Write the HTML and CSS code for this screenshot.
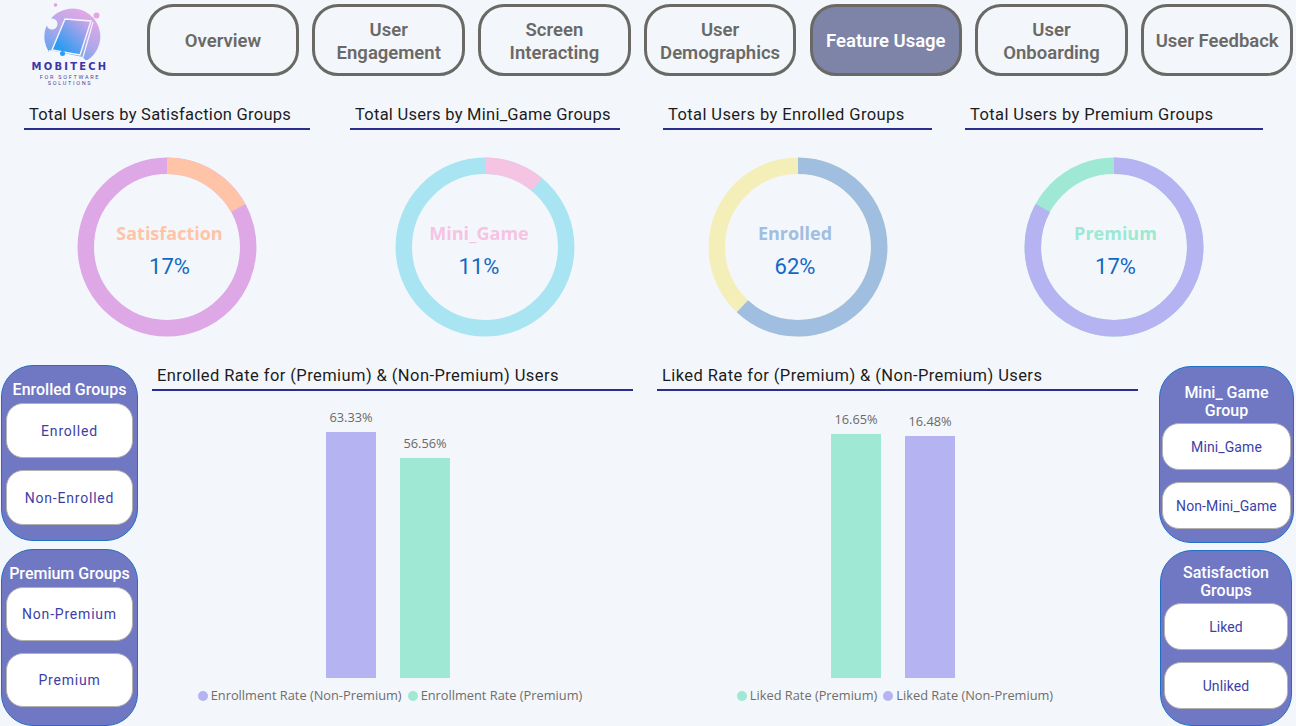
FILE: index.html
```html
<!DOCTYPE html>
<html lang="en">
<head>
    <meta charset="UTF-8">
    <title>Feature Usage</title>
    <link rel="stylesheet" href="styles.css">
</head>
<body>
    <header class="topBar">
        <div class="logo">
            <svg class="logoMark" width="80" height="60" viewBox="0 0 80 60">
                <defs>
                    <linearGradient id="logoFill" x1="0.1" y1="1" x2="0.7" y2="0">
                        <stop offset="0" stop-color="#4aa3f0"/>
                        <stop offset="0.55" stop-color="#b3a8ea"/>
                        <stop offset="1" stop-color="#e6a8e6"/>
                    </linearGradient>
                    <linearGradient id="tabletFill" x1="0" y1="1" x2="1" y2="0">
                        <stop offset="0.2" stop-color="#2a9cf2"/>
                        <stop offset="1" stop-color="#dfa6e8"/>
                    </linearGradient>
                </defs>
                <path d="M19 52 A28 28 0 1 1 56 61 L53 57 L19 50 Z" fill="url(#logoFill)"/>
                <path d="M35 19 L61 21 L50 55 L22 50 Z" fill="url(#tabletFill)" stroke="#f3f7fc" stroke-width="1.4"/>
                <path d="M63 22 L53 57" fill="none" stroke="#f3f7fc" stroke-width="1.2"/>
                <circle cx="25.5" cy="5" r="1.8" fill="#dfa0e0"/>
                <circle cx="66.5" cy="15.5" r="3" fill="#e3a5e3"/>
                <circle cx="22" cy="24" r="5.5" fill="#f3f7fc"/>
                <circle cx="32.5" cy="53.5" r="2.5" fill="#2a9cf2"/>
            </svg>
            <div class="logoName">MOBITECH</div>
            <div class="logoSub">FOR SOFTWARE<br>SOLUTIONS</div>
        </div>
        <nav class="navRow">
            <div class="navBtn">Overview</div>
            <div class="navBtn">User<br>Engagement</div>
            <div class="navBtn">Screen<br>Interacting</div>
            <div class="navBtn">User<br>Demographics</div>
            <div class="navBtn active">Feature Usage</div>
            <div class="navBtn">User<br>Onboarding</div>
            <div class="navBtn">User Feedback</div>
        </nav>
    </header>

    <section class="donutRow">
        <div class="donutPanel satisfaction">
            <h2 class="sectionTitle">Total Users by Satisfaction Groups</h2>
            <div class="donut">
                <svg width="180" height="180" viewBox="0 0 180 180">
                    <circle class="ring" cx="90" cy="90" r="81.2" pathLength="100" stroke="#dea8e6"/>
                    <circle class="ring" cx="90" cy="90" r="81.2" pathLength="100" stroke="#ffc4a8" stroke-dasharray="17 83"/>
                </svg>
                <div class="donutText">
                    <div class="donutName" style="color:#ffc4a8">Satisfaction</div>
                    <div class="donutValue">17%</div>
                </div>
            </div>
        </div>
        <div class="donutPanel miniGame">
            <h2 class="sectionTitle">Total Users by Mini_Game Groups</h2>
            <div class="donut">
                <svg width="180" height="180" viewBox="0 0 180 180">
                    <circle class="ring" cx="90" cy="90" r="81.2" pathLength="100" stroke="#a8e4f2"/>
                    <circle class="ring" cx="90" cy="90" r="81.2" pathLength="100" stroke="#f5c4e2" stroke-dasharray="11 89"/>
                </svg>
                <div class="donutText">
                    <div class="donutName" style="color:#f5c4e2">Mini_Game</div>
                    <div class="donutValue">11%</div>
                </div>
            </div>
        </div>
        <div class="donutPanel enrolled">
            <h2 class="sectionTitle">Total Users by Enrolled Groups</h2>
            <div class="donut">
                <svg width="180" height="180" viewBox="0 0 180 180">
                    <circle class="ring" cx="90" cy="90" r="81.2" pathLength="100" stroke="#f4eeb8"/>
                    <circle class="ring" cx="90" cy="90" r="81.2" pathLength="100" stroke="#a0bee0" stroke-dasharray="62 38"/>
                </svg>
                <div class="donutText">
                    <div class="donutName" style="color:#a0bee0">Enrolled</div>
                    <div class="donutValue">62%</div>
                </div>
            </div>
        </div>
        <div class="donutPanel premium">
            <h2 class="sectionTitle">Total Users by Premium Groups</h2>
            <div class="donut">
                <svg width="180" height="180" viewBox="0 0 180 180">
                    <circle class="ring" cx="90" cy="90" r="81.2" pathLength="100" stroke="#9ee8d4"/>
                    <circle class="ring" cx="90" cy="90" r="81.2" pathLength="100" stroke="#b6b3f2" stroke-dasharray="83 17"/>
                </svg>
                <div class="donutText">
                    <div class="donutName" style="color:#9ee8d4">Premium</div>
                    <div class="donutValue">17%</div>
                </div>
            </div>
        </div>
    </section>

    <section class="bottomRow">
        <aside class="slicerCol leftCol">
            <div class="slicer">
                <div class="slicerTitle">Enrolled Groups</div>
                <div class="slicerBtn">Enrolled</div>
                <div class="slicerBtn">Non-Enrolled</div>
            </div>
            <div class="slicer">
                <div class="slicerTitle">Premium Groups</div>
                <div class="slicerBtn">Non-Premium</div>
                <div class="slicerBtn">Premium</div>
            </div>
        </aside>

        <div class="chartPanel">
            <h2 class="sectionTitle">Enrolled Rate for (Premium) &amp; (Non-Premium) Users</h2>
            <div class="plot">
                <div class="barWrap">
                    <span class="barLabel">63.33%</span>
                    <div class="bar purple" style="height:246px"></div>
                </div>
                <div class="barWrap">
                    <span class="barLabel">56.56%</span>
                    <div class="bar green" style="height:220px"></div>
                </div>
            </div>
            <div class="legend">
                <span class="legendItem"><i class="dot purple"></i>Enrollment Rate (Non-Premium)</span>
                <span class="legendItem"><i class="dot green"></i>Enrollment Rate (Premium)</span>
            </div>
        </div>

        <div class="chartPanel">
            <h2 class="sectionTitle">Liked Rate for (Premium) &amp; (Non-Premium) Users</h2>
            <div class="plot">
                <div class="barWrap">
                    <span class="barLabel">16.65%</span>
                    <div class="bar green" style="height:244px"></div>
                </div>
                <div class="barWrap">
                    <span class="barLabel">16.48%</span>
                    <div class="bar purple" style="height:242px"></div>
                </div>
            </div>
            <div class="legend">
                <span class="legendItem"><i class="dot green"></i>Liked Rate (Premium)</span>
                <span class="legendItem"><i class="dot purple"></i>Liked Rate (Non-Premium)</span>
            </div>
        </div>

        <aside class="slicerCol rightCol">
            <div class="slicer twoLine">
                <div class="slicerTitle">Mini_ Game<br>Group</div>
                <div class="slicerBtn">Mini_Game</div>
                <div class="slicerBtn">Non-Mini_Game</div>
            </div>
            <div class="slicer twoLine narrow">
                <div class="slicerTitle">Satisfaction<br>Groups</div>
                <div class="slicerBtn">Liked</div>
                <div class="slicerBtn">Unliked</div>
            </div>
        </aside>
    </section>
</body>
</html>
```

FILE: styles.css
```css
* {
    box-sizing: border-box;
}

body {
    margin: 0;
    width: 1296px;
    height: 726px;
    overflow: hidden;
    background: #f3f7fc;
    font-family: "Roboto", "Liberation Sans", sans-serif;
}

/* top bar */
.topBar {
    display: flex;
    height: 73px;
    margin-top: 4px;
    padding-left: 30px;
}

.logo {
    width: 80px;
    height: 85px;
    margin-top: -4px;
    margin-right: 36.8px;
    flex-shrink: 0;
    display: flex;
    flex-direction: column;
    align-items: center;
}

.logoMark {
    flex-shrink: 0;
}

.logoName {
    font-family: "DejaVu Sans", sans-serif;
    font-weight: bold;
    font-size: 10px;
    letter-spacing: 2.2px;
    color: #3f35a5;
    line-height: 14px;
    white-space: nowrap;
}

.logoSub {
    font-size: 5.5px;
    letter-spacing: 1.7px;
    color: #4a46a0;
    line-height: 6px;
    text-align: center;
    white-space: nowrap;
}

.navRow {
    display: flex;
    gap: 13.2px;
}

.navBtn {
    width: 152.5px;
    height: 72px;
    padding-top: 3px;
    border: 3px solid #6b6966;
    border-radius: 26px;
    display: flex;
    align-items: center;
    justify-content: center;
    text-align: center;
    font-size: 18.5px;
    font-weight: 600;
    line-height: 23px;
    color: #6b6966;
}

.navBtn.active {
    background: #7e84a8;
    color: #ffffff;
}

/* section headings */
.sectionTitle {
    margin: 0;
    height: 26px;
    padding-left: 5px;
    border-bottom: 2px solid #2a2f8c;
    font-size: 16.5px;
    font-weight: 400;
    line-height: 22px;
    letter-spacing: 0.26px;
    color: #1c1c1c;
    white-space: nowrap;
}

/* donuts */
.donutRow {
    display: flex;
    margin-top: 27px;
    height: 261px;
}

.donutPanel {
    display: flex;
    flex-direction: column;
    align-items: center;
}

.donutPanel .sectionTitle {
    align-self: stretch;
}

.satisfaction { width: 286px; margin-left: 24px; }
.miniGame { width: 270px; margin-left: 40px; }
.enrolled { width: 269px; margin-left: 43px; }
.premium { width: 298px; margin-left: 33px; }

.enrolled .sectionTitle,
.premium .sectionTitle {
    letter-spacing: 0.4px;
}

.donut {
    display: grid;
    margin-top: 27px;
}

.donut svg,
.donutText {
    grid-area: 1 / 1;
}

.ring {
    fill: none;
    stroke-width: 16.5;
    transform: rotate(-90deg);
    transform-origin: 90px 90px;
}

.donutText {
    display: flex;
    flex-direction: column;
    align-items: center;
    justify-content: center;
    padding-top: 8px;
}

/* the labels sit a little off the ring centre */
.satisfaction .donutText { margin-left: 5px; }
.miniGame .donutText { margin-right: 12px; }
.enrolled .donutText { margin-right: 5px; }
.premium .donutText { margin-left: 3px; }

.donutName {
    font-family: "Open Sans", sans-serif;
    font-size: 18px;
    font-weight: 700;
    line-height: 26px;
}

.donutValue {
    font-size: 22px;
    line-height: 30px;
    margin-top: 6px;
    color: #1268c4;
}

/* bottom area */
.bottomRow {
    display: flex;
    height: 361px;
}

.slicerCol {
    flex-shrink: 0;
    display: flex;
    flex-direction: column;
}

.leftCol {
    width: 137px;
    margin-left: 1px;
    margin-right: 14px;
    gap: 8px;
}

.rightCol {
    width: 136px;
    margin-left: 21px;
    padding-top: 1px;
    gap: 7px;
}

.slicer {
    width: 100%;
    height: 176px;
    background: #7078c4;
    border: 1px solid #1f6fc4;
    border-radius: 32px;
    padding: 0 4px;
    display: flex;
    flex-direction: column;
    gap: 12px;
    flex-shrink: 0;
}

.leftCol .slicer:last-child {
    height: 177px;
}

.leftCol .slicer:last-child .slicerBtn {
    height: 54px;
}

.slicerTitle {
    height: 37px;
    padding-top: 10px;
    margin-bottom: -12px;
    display: flex;
    align-items: center;
    justify-content: center;
    text-align: center;
    font-size: 16px;
    font-weight: 500;
    line-height: 18px;
    color: #ffffff;
    white-space: nowrap;
}

.slicerBtn {
    height: 55px;
    background: #ffffff;
    border: 1px solid #b4b2ae;
    border-radius: 17px;
    display: flex;
    align-items: center;
    justify-content: center;
    font-size: 14px;
    letter-spacing: 0.8px;
    color: #3d3fa8;
}

.twoLine {
    width: 135px;
    height: 177px;
    padding: 0 2px;
}

.twoLine .slicerTitle {
    height: 56px;
    padding-top: 14px;
}

.twoLine .slicerBtn {
    height: 47px;
    letter-spacing: 0.1px;
}

.slicer.narrow {
    width: 132px;
    height: 176px;
    margin-left: 1px;
    padding: 0 3px;
}

.narrow .slicerTitle {
    height: 52px;
    padding-top: 10px;
}

/* bar charts */
.chartPanel {
    width: 481px;
    flex-shrink: 0;
    margin-right: 24px;
    display: flex;
    flex-direction: column;
}

.chartPanel:nth-child(3) {
    margin-right: 0;
}

.chartPanel .sectionTitle {
    letter-spacing: 0.42px;
}

.plot {
    height: 287px;
    padding-right: 9px;
    display: flex;
    justify-content: center;
    align-items: flex-end;
    gap: 24px;
}

.barWrap {
    width: 50px;
    display: flex;
    flex-direction: column;
    align-items: center;
}

.barLabel {
    font-family: "Open Sans", sans-serif;
    font-size: 12.8px;
    line-height: 17px;
    color: #6b6966;
    margin-bottom: 6px;
    white-space: nowrap;
}

.bar.purple,
.dot.purple {
    background: #b6b3f2;
}

.bar.green,
.dot.green {
    background: #9ee8d4;
}

.bar {
    width: 50px;
}

.legend {
    display: flex;
    justify-content: center;
    gap: 6px;
    margin-top: 9px;
    padding-right: 5px;
    font-family: "Open Sans", sans-serif;
    font-size: 12.8px;
    line-height: 17px;
    color: #6f6d6b;
}

.legendItem {
    display: flex;
    align-items: center;
    gap: 3px;
}

.dot {
    width: 10px;
    height: 10px;
    border-radius: 50%;
}
```
